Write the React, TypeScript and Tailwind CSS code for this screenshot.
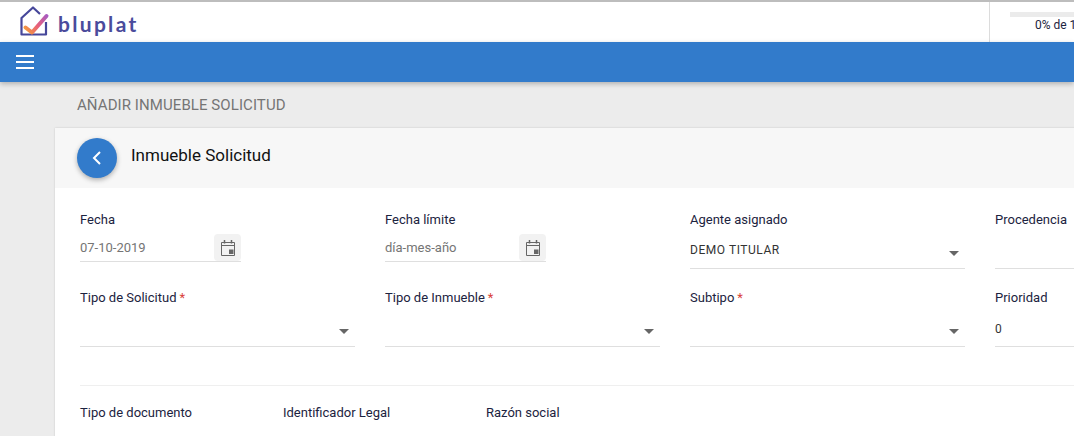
const sans = "font-['Roboto',sans-serif]";

const CalendarIcon = () => (
  <svg width="14" height="16" viewBox="0 0 14 16" fill="none" className="text-[#666]">
    <path d="M.5 2.500h13v13H.5z M.5 5.500h13" stroke="currentColor" strokeWidth="1" />
    <path d="M3.500 0v3.500 M10.500 0v3.500" stroke="currentColor" strokeWidth="1.500" />
    <rect x="8" y="9.500" width="4.500" height="4.500" fill="currentColor" />
  </svg>
);

const Caret = () => (
  <span className="block h-0 w-0 border-x-[5.5px] border-t-[5px] border-x-transparent border-t-[#666]" />
);

const Label = ({ text, required }: { text: string; required?: boolean }) => (
  <label className="block h-[20px] text-[13px] leading-[20px] text-[#1c2340]">
    {text}
    {required && <span className="ml-[3px] text-[#d9423a]">*</span>}
  </label>
);

const DateField = ({ label, value }: { label: string; value: string }) => (
  <div className="w-[161px]">
    <Label text={label} />
    <div className="mt-[4px] flex h-[28px] items-center justify-between border-b border-[#dfdfdf]">
      <span className="text-[13px] text-[#757575]">{value}</span>
      <span className="flex h-[27px] w-[27px] items-center justify-center rounded-sm bg-[#f2f2f2]">
        <CalendarIcon />
      </span>
    </div>
  </div>
);

const SelectField = ({ label, value, required }: { label: string; value?: string; required?: boolean }) => (
  <div>
    <Label text={label} required={required} />
    <div className="mt-[8px] flex h-[31px] items-start justify-between border-b border-[#dfdfdf] pr-[6px] pt-[4px]">
      <span className="text-[12px] leading-[16px] tracking-[0.55px] text-[#333]">{value}</span>
      <span className="mt-[9px]"><Caret /></span>
    </div>
  </div>
);

const Logo = () => (
  <div className="-mt-[2px] flex items-center gap-[8px]">
    <svg width="30" height="30" viewBox="0 0 30 30" fill="none">
      <defs>
        <linearGradient id="check" x1="5" y1="24" x2="27" y2="10" gradientUnits="userSpaceOnUse">
          <stop offset="0" stopColor="#f59a3c" />
          <stop offset="0.5" stopColor="#e8607a" />
          <stop offset="1" stopColor="#a85bc0" />
        </linearGradient>
      </defs>
      <path d="M20 8 13 1.500 1.500 12v16.500H26V16" stroke="#46479a" strokeWidth="2.200" strokeLinejoin="round" />
      <path d="M5.500 21.500 12 26.500 26.500 10" stroke="url(#check)" strokeWidth="4" strokeLinecap="round" strokeLinejoin="round" />
    </svg>
    <span className="mt-[5px] font-['Lato',sans-serif] text-[21px] font-bold leading-none tracking-[2.3px] text-[#4a4b9c]">
      bluplat
    </span>
  </div>
);

const App = () => {
  return (
    <div className={`${sans} h-[436px] w-[1074px] overflow-hidden bg-[#ececec]`}>
      <header className="flex h-[42px] items-center justify-between border-t-2 border-[#bdbdbd] bg-white pl-[20px]">
        <Logo />
        <div className="h-full w-[85px] shrink-0 overflow-hidden whitespace-nowrap border-l border-[#dcdcdc] pl-[20px]">
          <div className="mt-[10px] h-[5px] w-[200px] bg-[#ebebeb]" />
          <div className="pl-[25px] text-[12px] leading-[16px] text-[#1c2340]">0% de 100%</div>
        </div>
      </header>

      <nav className="relative z-10 flex h-[40px] items-center bg-[#327bcb] pl-[16px] shadow-[0_2px_5px_rgba(0,0,0,0.25)]">
        <div className="flex w-[18px] flex-col gap-[4px]">
          <span className="h-[2px] bg-white" />
          <span className="h-[2px] bg-white" />
          <span className="h-[2px] bg-white" />
        </div>
      </nav>

      <main className="pl-[55px]">
        <h1 className="flex h-[46px] items-center pl-[22px] text-[15px] tracking-[0.08px] text-[#757575]">
          AÑADIR INMUEBLE SOLICITUD
        </h1>
        <section className="min-h-[320px] w-[1100px] bg-white shadow-[0_0_2px_rgba(0,0,0,0.15)]">
          <div className="flex h-[60px] items-center gap-[14px] bg-[#f7f7f7] pl-[22px]">
            <button className="flex h-[40px] w-[40px] items-center justify-center rounded-full bg-[#327bcb] shadow-[0_2px_5px_rgba(0,0,0,0.3)]">
              <svg width="14" height="16" viewBox="0 0 14 16" fill="none">
                <path d="M10 2 4 8l6 6" stroke="white" strokeWidth="2" />
              </svg>
            </button>
            <h2 className="-mt-[5px] text-[17px] text-[#111]">Inmueble Solicitud</h2>
          </div>

          <div className="px-[25px] pt-[22px]">
            <div className="grid grid-cols-[repeat(4,275px)] gap-x-[30px]">
              <DateField label="Fecha" value="07-10-2019" />
              <DateField label="Fecha límite" value="día-mes-año" />
              <SelectField label="Agente asignado" value="DEMO TITULAR" />
              <div>
                <Label text="Procedencia" />
                <div className="mt-[8px] h-[31px] border-b border-[#dfdfdf]" />
              </div>
            </div>
            <div className="mt-[19px] grid grid-cols-[repeat(4,275px)] gap-x-[30px]">
              <SelectField label="Tipo de Solicitud" required />
              <SelectField label="Tipo de Inmueble" required />
              <SelectField label="Subtipo" required />
              <div>
                <Label text="Prioridad" />
                <div className="mt-[8px] h-[31px] border-b border-[#dfdfdf] pt-[5px] text-[12px] leading-[16px] text-[#333]">0</div>
              </div>
            </div>
            <hr className="mt-[38px] border-[#efefef]" />
            <div className="mt-[17px] flex text-[13px] leading-[20px] text-[#1c2340]">
              <span className="w-[203px]">Tipo de documento</span>
              <span className="w-[203px]">Identificador Legal</span>
              <span>Razón social</span>
            </div>
          </div>
        </section>
      </main>
    </div>
  );
};

export default App;
